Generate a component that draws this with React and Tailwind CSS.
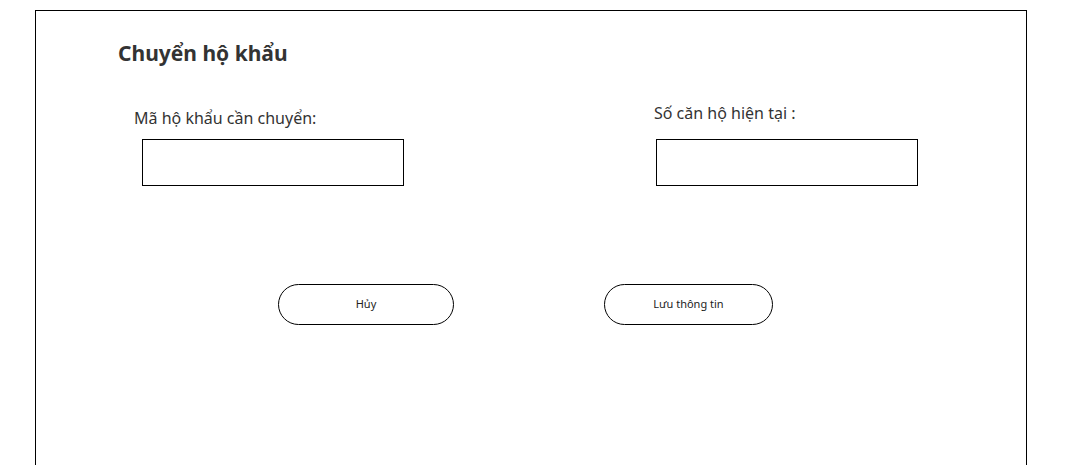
export default function App() {
  return (
    <div className="min-h-[465px] bg-white pl-[35px] pt-[10px] overflow-hidden" style={{ fontFamily: '"Noto Sans", "Open Sans", sans-serif' }}>
      <div className="w-[992px] h-[460px] border border-b-0 border-black bg-white">
        <h1 className="ml-[82px] mt-[27px] text-[21px] leading-[30px] font-bold text-[#333333]">Chuyển hộ khẩu</h1>

        <div className="flex items-end mt-[33px]">
          <div className="ml-[98px] w-[270px] flex flex-col">
            <label className="mb-[9px] text-[16px] leading-[24px] text-[#333333]">Mã hộ khẩu cần chuyển:</label>
            <input className="ml-2 w-[262px] h-[47px] border border-black bg-white outline-none" />
          </div>
          <div className="ml-[250px] flex flex-col">
            <label className="mb-[14px] text-[16px] leading-[24px] text-[#333333]">Số căn hộ hiện tại :</label>
            <input className="ml-[2px] w-[262px] h-[47px] border border-black bg-white outline-none" />
          </div>
        </div>

        <div className="flex ml-[242px] mt-[98px] gap-[150px]">
          <button className="w-[176px] h-[41px] rounded-full border border-black bg-white text-[11px] text-[#222222]">Hủy</button>
          <button className="w-[169px] h-[41px] rounded-full border border-black bg-white text-[11px] text-[#222222]">Lưu thông tin</button>
        </div>
      </div>
    </div>
  );
}
